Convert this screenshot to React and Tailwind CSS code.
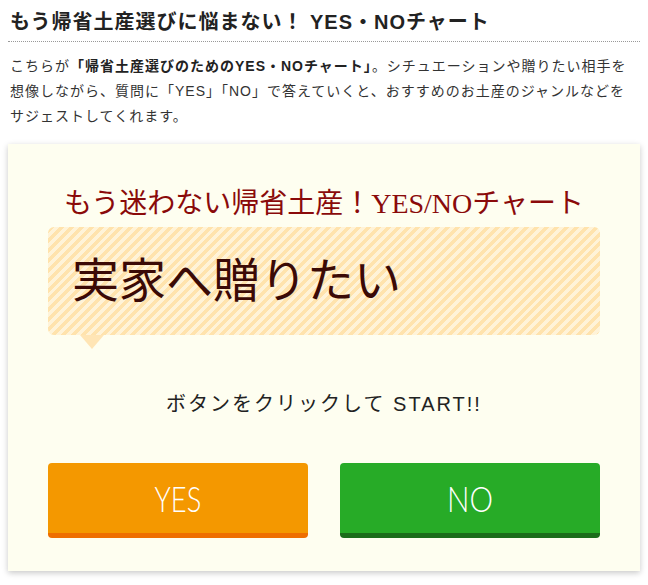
import React from "react";

export default function App() {
  const sans = { fontFamily: '"Liberation Sans", "Noto Sans CJK JP", sans-serif' };
  const serif = { fontFamily: '"Liberation Serif", "Noto Sans CJK JP", serif' };
  const btnFont = { fontFamily: 'Lato, "Liberation Sans", sans-serif' };
  return (
    <div className="w-[648px] bg-white px-2 pb-3" style={sans}>
      <h1 className="pl-[2px] pt-[8px] pb-[5px] text-[20px] leading-[28px] tracking-[1px] font-bold text-[#222] border-b border-dotted border-[#999]">
        もう帰省土産選びに悩まない！ YES・NOチャート
      </h1>
      <p className="pl-[2px] pr-[2px] mt-[12px] text-[14px] leading-[25px] tracking-[1px] text-[#333]">
        こちらが<b className="font-bold text-[#222]">「帰省土産選びのためのYES・NOチャート」</b>。シチュエーションや贈りたい相手を想像しながら、質問に「YES」「NO」で答えていくと、おすすめのお土産のジャンルなどをサジェストしてくれます。
      </p>
      <div className="mt-[15px] bg-[#fefef0] shadow-[0_2px_6px_rgba(0,0,0,0.22)] px-10 pt-[41px] pb-[33px]">
        <div className="text-center text-[28px] leading-[38px] text-[#8a0a0a] mb-[4px]" style={serif}>
          もう迷わない帰省土産！YES/NOチャート
        </div>
        <div className="relative">
          <div className="h-[108px] rounded-[6px] bg-[repeating-linear-gradient(-45deg,#ffe3ad_0px,#ffe3ad_3.5px,#fff3d8_3.5px,#fff3d8_7px)] flex items-center pl-[24px]">
            <span className="text-[47px] leading-[60px] text-[#3b0a06]" style={serif}>
              実家へ贈りたい
            </span>
          </div>
          <div className="absolute left-[32px] top-[108px] w-0 h-0 border-l-[12px] border-r-[12px] border-t-[14px] border-l-transparent border-r-transparent border-t-[#ffe5b5]" />
        </div>
        <div className="mt-[54px] text-center text-[20px] leading-[30px] tracking-[2px] text-[#222]">
          ボタンをクリックして START!!
        </div>
        <div className="mt-[44px] flex justify-between">
          <button className="w-[260px] h-[75px] rounded-[4px] bg-[#f49800] border-b-[5px] border-[#ee6e00] text-white text-[35px] font-light" style={btnFont}>
            <span className="inline-block scale-x-[0.78]">YES</span>
          </button>
          <button className="w-[260px] h-[75px] rounded-[4px] bg-[#27ab27] border-b-[5px] border-[#1b6d1a] text-white text-[35px] font-light" style={btnFont}>
            <span className="inline-block scale-x-[0.85]">NO</span>
          </button>
        </div>
      </div>
    </div>
  );
}
